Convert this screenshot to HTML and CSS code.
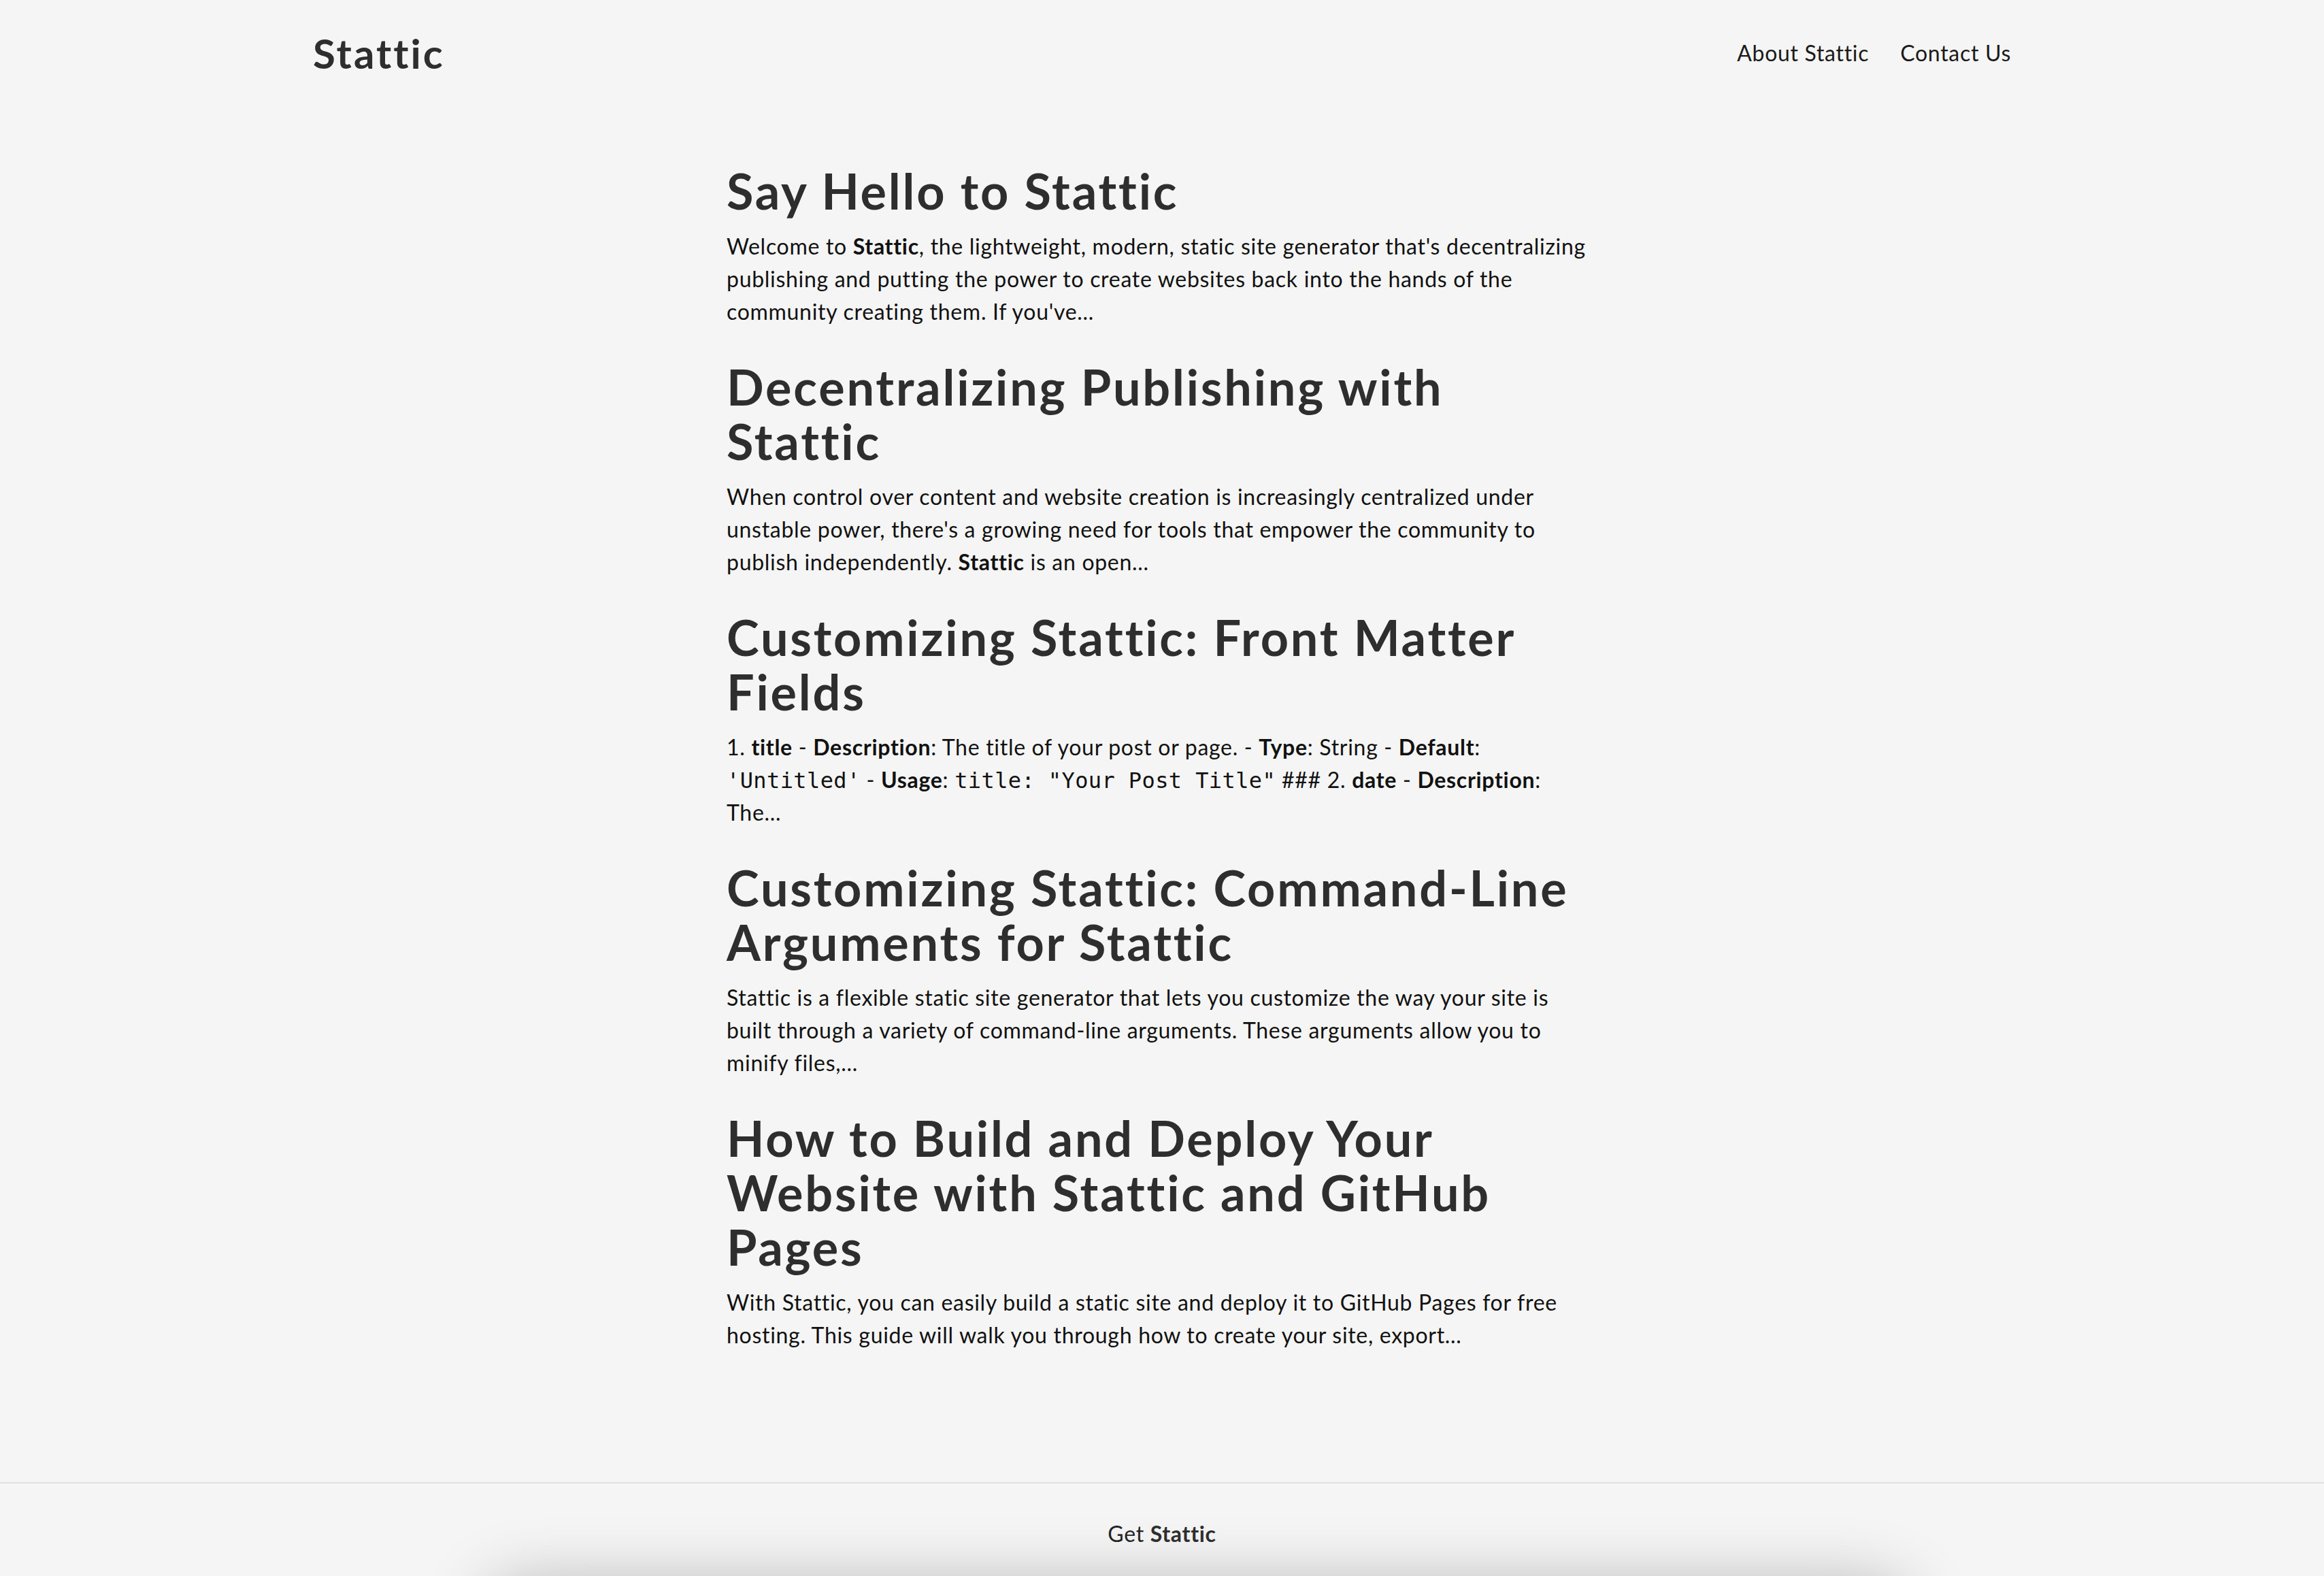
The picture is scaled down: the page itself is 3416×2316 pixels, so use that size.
FILE: index.html
```html
<!DOCTYPE html>
<html lang="en">
<head>
<meta charset="utf-8">
<title>Stattic</title>
<link rel="stylesheet" href="styles.css">
</head>
<body>
<header class="site-header">
  <a class="logo" href="#">Stattic</a>
  <nav class="site-nav">
    <a href="#">About Stattic</a>
    <a href="#">Contact Us</a>
  </nav>
</header>

<main class="post-list">
  <article class="post">
    <h2 class="post-title">Say Hello to Stattic</h2>
    <p class="post-excerpt">Welcome to <strong>Stattic</strong>, the lightweight, modern, static site generator that's decentralizing publishing and putting the power to create websites back into the hands of the community creating them. If you've…</p>
  </article>
  <article class="post">
    <h2 class="post-title">Decentralizing Publishing with Stattic</h2>
    <p class="post-excerpt">When control over content and website creation is increasingly centralized under unstable power, there's a growing need for tools that empower the community to publish independently. <strong>Stattic</strong> is an open…</p>
  </article>
  <article class="post">
    <h2 class="post-title">Customizing Stattic: Front Matter Fields</h2>
    <p class="post-excerpt">1. <strong>title</strong> - <strong>Description</strong>: The title of your post or page. - <strong>Type</strong>: String - <strong>Default</strong>: <code>'Untitled'</code> - <strong>Usage</strong>: <code>title: "Your Post Title"</code> ### 2. <strong>date</strong> - <strong>Description</strong>: The…</p>
  </article>
  <article class="post">
    <h2 class="post-title">Customizing Stattic: Command-Line Arguments for Stattic</h2>
    <p class="post-excerpt">Stattic is a flexible static site generator that lets you customize the way your site is built through a variety of command-line arguments. These arguments allow you to minify files,…</p>
  </article>
  <article class="post">
    <h2 class="post-title">How to Build and Deploy Your Website with Stattic and GitHub Pages</h2>
    <p class="post-excerpt">With Stattic, you can easily build a static site and deploy it to GitHub Pages for free hosting. This guide will walk you through how to create your site, export…</p>
  </article>
</main>

<footer class="site-footer">
  <p class="footer-text">Get <strong>Stattic</strong></p>
  <div class="footer-card"></div>
</footer>
</body>
</html>
```

FILE: styles.css
```css
html {
  overflow: hidden;
}

body {
  margin: 0;
  min-height: 100vh;
  display: flex;
  flex-direction: column;
  background: #f5f5f5;
  color: #111;
  font-family: "Lato", "Open Sans", sans-serif;
  font-size: 32px;
  line-height: 48px;
  letter-spacing: 0.7px;
  font-variant-ligatures: none;
}

a {
  color: inherit;
  text-decoration: none;
}

.site-header {
  width: 2496px;
  height: 156px;
  margin: 0 auto;
  display: flex;
  align-items: center;
  justify-content: space-between;
}

.logo {
  font-size: 60px;
  font-weight: 700;
  letter-spacing: 3px;
  color: #2e2e2e;
  line-height: 1;
}

.site-nav {
  display: flex;
  gap: 46px;
  color: #1a1a1a;
}

.post-list {
  flex: 1;
  box-sizing: border-box;
  width: 1280px;
  margin: 0 auto;
  padding: 84px 8px 146px 0;
}

.post {
  margin-bottom: 46px;
}

.post:last-child {
  margin-bottom: 0;
}

.post-title {
  margin: 0 0 18px;
  font-size: 72px;
  line-height: 80px;
  font-weight: 700;
  letter-spacing: 2.8px;
  color: #2e2e2e;
}

.post-excerpt {
  margin: 0;
  color: #111;
}

.post-excerpt strong {
  font-weight: 700;
}

.post-excerpt code {
  font-family: "DejaVu Sans Mono", "Liberation Mono", monospace;
  font-size: 32px;
  line-height: 1;
  letter-spacing: 0.4px;
}

.site-footer {
  flex: none;
  height: 136px;
  border-top: 2px solid #e0e0e0;
  overflow: hidden;
}

.footer-text {
  margin: 0;
  padding-top: 50px;
  text-align: center;
  color: #222;
}

.footer-text strong {
  color: #2e2e2e;
}

.footer-card {
  width: 2080px;
  height: 200px;
  margin-top: 56px;
  margin-left: calc(50% - 988px);
  border-radius: 40px;
  background: #f5f5f5;
  box-shadow: 0 0 100px rgba(0, 0, 0, 0.3);
}
```
